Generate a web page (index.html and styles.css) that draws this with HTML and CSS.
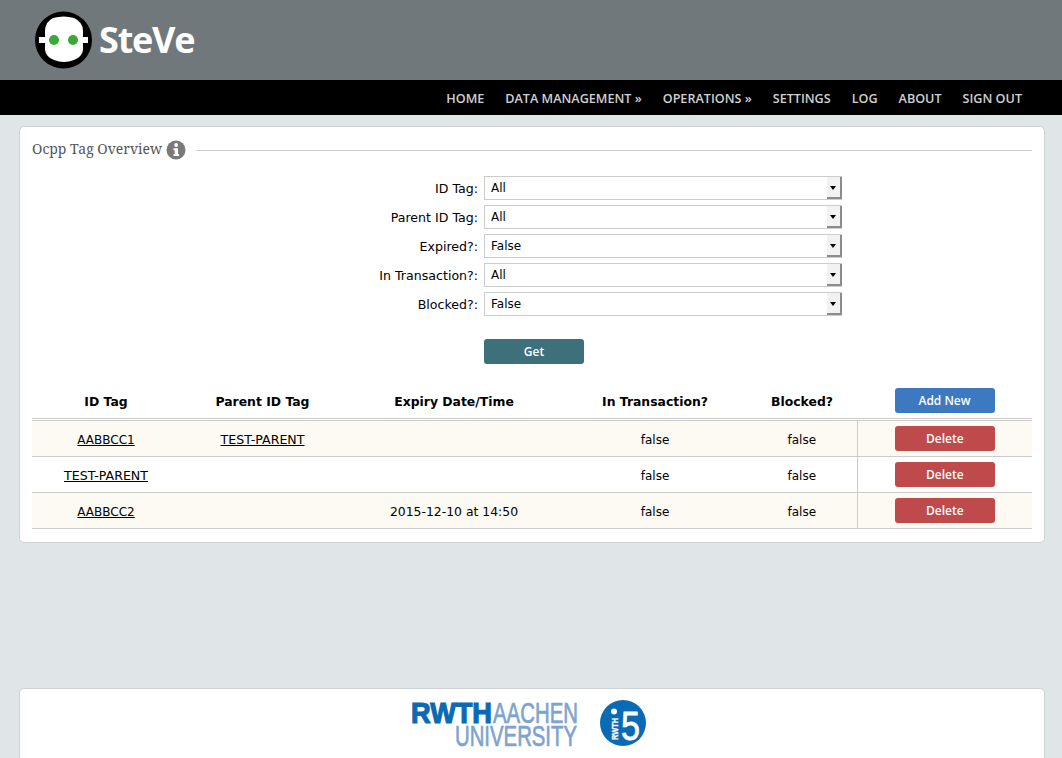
FILE: index.html
```html
<!DOCTYPE html>
<html lang="en">
<head>
<meta charset="UTF-8">
<title>SteVe - Ocpp Tag Overview</title>
<link rel="stylesheet" href="styles.css">
</head>
<body>
<header class="top-banner">
    <a class="logo" href="#">
        <svg class="logo-icon" width="60" height="60" viewBox="0 0 60 60">
            <circle cx="29.500" cy="30" r="28.500" fill="#000"/>
            <path d="M19 8 Q30 5 40 8 Q49 12 49 21 L49 27 L54 27 L54 33 L49 33 L49 40 Q48 47 40 50 Q30 54 20 50 Q12 47 11 40 L11 33 L5 33 L5 27 L11 27 L11 21 Q11 12 19 8 Z" fill="#fff"/>
            <circle cx="20" cy="30" r="5" fill="#3aaa35"/>
            <circle cx="39" cy="30" r="5" fill="#3aaa35"/>
        </svg>
        <span class="logo-text">SteVe</span>
    </a>
</header>
<nav class="main-nav">
    <a href="#">HOME</a>
    <a href="#">DATA MANAGEMENT &raquo;</a>
    <a href="#">OPERATIONS &raquo;</a>
    <a href="#">SETTINGS</a>
    <a href="#">LOG</a>
    <a href="#">ABOUT</a>
    <a href="#">SIGN OUT</a>
</nav>

<main class="card content">
    <div class="section-title">
        <span class="section-name">Ocpp Tag Overview</span>
        <svg class="info-icon" width="20" height="20" viewBox="0 0 20 20">
            <circle cx="10" cy="10" r="9.500" fill="#7a7a7a"/>
            <circle cx="10.200" cy="5" r="2" fill="#fff"/>
            <path d="M7.500 8.200 H12 V14 H13 V16 H7.500 V14 H8.700 V10.200 H7.500 Z" fill="#fff"/>
        </svg>
        <span class="section-rule"></span>
    </div>

    <form class="filter-form">
        <label class="filter-label" for="idTag">ID Tag:</label>
        <div class="select-wrap">
            <select id="idTag"><option>All</option></select>
            <span class="select-arrow"></span>
        </div>
        <label class="filter-label" for="parentTag">Parent ID Tag:</label>
        <div class="select-wrap">
            <select id="parentTag"><option>All</option></select>
            <span class="select-arrow"></span>
        </div>
        <label class="filter-label" for="expired">Expired?:</label>
        <div class="select-wrap">
            <select id="expired"><option>False</option></select>
            <span class="select-arrow"></span>
        </div>
        <label class="filter-label" for="inTransaction">In Transaction?:</label>
        <div class="select-wrap">
            <select id="inTransaction"><option>All</option></select>
            <span class="select-arrow"></span>
        </div>
        <label class="filter-label" for="blocked">Blocked?:</label>
        <div class="select-wrap">
            <select id="blocked"><option>False</option></select>
            <span class="select-arrow"></span>
        </div>
        <button class="btn btn-get" type="button">Get</button>
    </form>

    <table class="tag-table">
        <colgroup>
            <col class="col-id">
            <col class="col-parent">
            <col class="col-expiry">
            <col class="col-trans">
            <col class="col-blocked">
            <col>
        </colgroup>
        <thead>
            <tr>
                <th>ID Tag</th>
                <th>Parent ID Tag</th>
                <th>Expiry Date/Time</th>
                <th>In Transaction?</th>
                <th>Blocked?</th>
                <th><button class="btn btn-add" type="button">Add New</button></th>
            </tr>
        </thead>
        <tbody>
            <tr>
                <td><a class="tag-short" href="#">AABBCC1</a></td>
                <td><a href="#">TEST-PARENT</a></td>
                <td></td>
                <td class="flag-cell">false</td>
                <td class="flag-cell">false</td>
                <td class="action-cell"><button class="btn btn-delete" type="button">Delete</button></td>
            </tr>
            <tr>
                <td><a href="#">TEST-PARENT</a></td>
                <td></td>
                <td></td>
                <td class="flag-cell">false</td>
                <td class="flag-cell">false</td>
                <td class="action-cell"><button class="btn btn-delete" type="button">Delete</button></td>
            </tr>
            <tr>
                <td><a class="tag-short" href="#">AABBCC2</a></td>
                <td></td>
                <td>2015-12-10 at 14:50</td>
                <td class="flag-cell">false</td>
                <td class="flag-cell">false</td>
                <td class="action-cell"><button class="btn btn-delete" type="button">Delete</button></td>
            </tr>
        </tbody>
    </table>
</main>

<footer class="card page-footer">
    <svg class="rwth-logo" width="168" height="56" viewBox="0 0 168 56">
        <text class="rwth-strong" x="0" y="27" textLength="81" lengthAdjust="spacingAndGlyphs">RWTH</text>
        <text class="rwth-light" x="82" y="27" textLength="85" lengthAdjust="spacingAndGlyphs">AACHEN</text>
        <text class="rwth-light" x="44" y="50" textLength="122" lengthAdjust="spacingAndGlyphs">UNIVERSITY</text>
    </svg>
    <svg class="i5-logo" width="46" height="46" viewBox="0 0 46 46">
        <circle cx="23" cy="23" r="23" fill="#0a6ab4"/>
        <circle cx="14" cy="11.500" r="3" fill="#fff"/>
        <text class="i5-small" transform="translate(18 40) rotate(-90)" textLength="22" lengthAdjust="spacingAndGlyphs">RWTH</text>
        <text class="i5-num" x="21" y="40" textLength="19" lengthAdjust="spacingAndGlyphs">5</text>
    </svg>
</footer>
</body>
</html>
```

FILE: styles.css
```css
html, body {
    height: 758px;
    overflow: hidden;
}

body {
    margin: 0;
    background-color: #e0e5e8;
    font-family: "DejaVu Sans", Verdana, sans-serif;
    font-size: 12px;
    color: #000;
}

.top-banner {
    height: 80px;
    background-color: #71787b;
    box-sizing: border-box;
    padding: 10px 0 0 34px;
}

.logo {
    display: flex;
    align-items: center;
    text-decoration: none;
}

.logo-icon {
    flex: none;
}

.logo-text {
    margin: 0 0 0 5px;
    font-family: "Open Sans", sans-serif;
    font-weight: 700;
    font-size: 36px;
    letter-spacing: -1.2px;
    line-height: 60px;
    color: #fff;
}

.main-nav {
    height: 35px;
    background-color: #000;
    display: flex;
    justify-content: flex-end;
    align-items: center;
    gap: 21px;
    padding: 1px 40px 0 0;
    box-sizing: border-box;
}

.main-nav a {
    font-family: "Open Sans", sans-serif;
    font-weight: 600;
    font-size: 12.600px;
    color: #d0d0d0;
    text-decoration: none;
}

.card {
    background-color: #fff;
    border: 1px solid #cfd2d5;
    border-radius: 5px;
    margin: 0 17px 0 19px;
}

.content {
    margin-top: 11px;
    padding: 0 12px 13px 12px;
    height: 402px;
}

.section-title {
    display: flex;
    align-items: center;
    height: 45px;
}

.section-name {
    position: relative;
    top: -1px;
    font-family: "Noto Serif", "DejaVu Serif", serif;
    font-size: 14px;
    color: #555;
}

.info-icon {
    margin-left: 4px;
    flex: none;
}

.section-rule {
    flex: 1;
    height: 1px;
    margin: 2px 0 0 10px;
    background-color: #ccc;
}

.filter-form {
    display: grid;
    grid-template-columns: 446px 358px;
    column-gap: 6px;
    row-gap: 5px;
    margin-top: 4px;
    align-items: center;
}

.filter-label {
    text-align: right;
    font-size: 12.600px;
}

.select-wrap {
    position: relative;
    height: 24px;
}

.select-wrap select {
    appearance: none;
    width: 100%;
    height: 24px;
    box-sizing: border-box;
    padding: 0 0 0 6px;
    border: 1px solid #ccc;
    border-radius: 0;
    background-color: #fff;
    font-family: inherit;
    font-size: 12px;
    color: #000;
}

.select-arrow {
    position: absolute;
    top: 1px;
    right: 0;
    width: 15px;
    height: 22px;
    box-sizing: border-box;
    background-color: #f2f2f2;
    border-right: 2px solid #8c8c8c;
    border-bottom: 2px solid #8c8c8c;
}

.select-arrow::after {
    content: "";
    position: absolute;
    top: 9px;
    left: 3px;
    border-left: 3px solid transparent;
    border-right: 3px solid transparent;
    border-top: 4px solid #000;
}

.btn {
    width: 100px;
    height: 25px;
    border: none;
    border-radius: 3px;
    color: #fff;
    font-family: "Open Sans", sans-serif;
    font-weight: 600;
    font-size: 12px;
    cursor: pointer;
}

.btn-get {
    grid-column: 2;
    margin-top: 18px;
    background-color: #3d707a;
}

.btn-add {
    margin: -1px 0 1px 0;
    background-color: #3c79c0;
}

.btn-delete {
    background-color: #bf4a4b;
}

.tag-table {
    width: 1000px;
    margin-top: 24px;
    border-collapse: collapse;
    table-layout: fixed;
    font-size: 12.400px;
}

.col-id { width: 148px; }
.col-parent { width: 165px; }
.col-expiry { width: 218px; }
.col-trans { width: 184px; }
.col-blocked { width: 110px; }

.tag-table th {
    height: 25px;
    padding: 1px 0 4px 0;
    font-weight: 700;
    text-align: center;
    border-bottom: 3px double #ccc;
}

.tag-table td {
    height: 33px;
    padding: 2px 0 0 0;
    text-align: center;
    border-bottom: 1px solid #ccc;
}

.tag-table tbody tr:nth-child(odd) td {
    background-color: #fdf9f3;
}

.tag-table a {
    color: #000;
    font-size: 12.600px;
}

.tag-table .tag-short {
    font-size: 12px;
}

.tag-table .flag-cell {
    font-size: 12px;
}

.tag-table .action-cell {
    height: 35px;
    padding: 0;
    border-left: 1px solid #ccc;
}

.page-footer {
    margin-top: 145px;
    height: 80px;
    display: flex;
    justify-content: center;
    align-items: flex-start;
    gap: 21px;
    padding-top: 7px;
    box-sizing: border-box;
}

.rwth-logo,
.i5-logo {
    overflow: visible;
}

.i5-logo {
    margin: 4px 7px 0 0;
}

.rwth-strong {
    font-family: "Liberation Sans", sans-serif;
    font-weight: 700;
    font-size: 29px;
    fill: #0a6ab4;
    stroke: #0a6ab4;
    stroke-width: 1.200px;
}

.rwth-light {
    font-family: "Liberation Sans", sans-serif;
    font-size: 29px;
    fill: #7ea3cf;
    stroke: #7ea3cf;
    stroke-width: 0.700px;
}

.i5-small {
    font-family: "Liberation Sans", sans-serif;
    font-weight: 700;
    font-size: 9px;
    fill: #fff;
    stroke: #fff;
    stroke-width: 0.300px;
}

.i5-num {
    font-family: "Liberation Sans", sans-serif;
    font-size: 40px;
    fill: #fff;
    stroke: #fff;
    stroke-width: 0.800px;
}
```
